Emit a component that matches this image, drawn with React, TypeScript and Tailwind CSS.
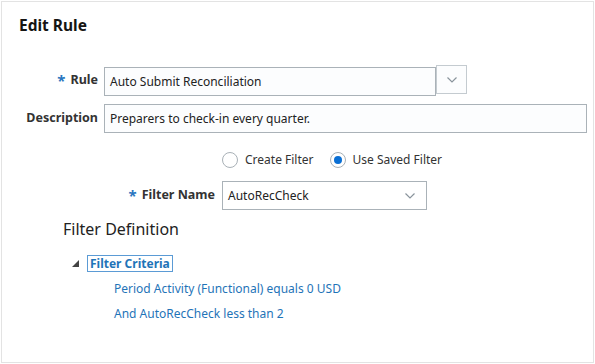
import React from 'react';

const font = { fontFamily: '"Noto Sans", "Open Sans", sans-serif' };

const Chevron = () => (
  <svg width="12" height="8" viewBox="0 0 12 8" fill="none">
    <path d="M1.5 1.5 L6 6 L10.5 1.5" stroke="#8a949c" strokeWidth="1.2" />
  </svg>
);

const App: React.FC = () => {
  return (
    <div className="w-[595px] h-[364px] bg-white p-px" style={font}>
      <div className="h-full border border-[#e3e3e3] text-[12px] text-[#333]">
        <h1 className="pl-[17px] pt-[12px] text-[15.5px] font-bold text-[#161513] leading-[22px]">Edit Rule</h1>

        {/* Rule */}
        <div className="flex items-center mt-[29px]">
          <div className="w-[96px] flex justify-end items-center gap-[5px] font-bold text-[12.5px]">
            <span className="text-[#2a76c0] text-[15px] leading-none">*</span>
            <span>Rule</span>
          </div>
          <div className="ml-[6px] flex items-start">
            <div className="w-[332px] h-[29px] mt-[2px] border border-[#aab2b8] bg-[#fcfdfe] px-[5px] flex items-center text-[#222]">
              Auto Submit Reconciliation
            </div>
            <div className="w-[31px] h-[29px] border border-[#c4cbd0] bg-[#fcfdfe] flex items-center justify-center">
              <Chevron />
            </div>
          </div>
        </div>

        {/* Description */}
        <div className="flex items-center mt-[8px]">
          <div className="w-[96px] text-right font-bold text-[12.5px]">Description</div>
          <div className="ml-[6px] w-[483px] h-[29px] border border-[#aab2b8] bg-[#fcfdfe] px-[5px] flex items-center text-[#222]">
            Preparers to check-in every quarter.
          </div>
        </div>

        {/* Radios */}
        <div className="flex items-center mt-[18px] ml-[220px] gap-[16px]">
          <label className="flex items-center gap-[7px]">
            <span className="w-[16px] h-[16px] rounded-full border border-[#a9b1b7] bg-white" />
            <span>Create Filter</span>
          </label>
          <label className="flex items-center gap-[7px]">
            <span className="w-[16px] h-[16px] rounded-full border border-[#a9b1b7] bg-white flex items-center justify-center">
              <span className="w-[8px] h-[8px] rounded-full bg-[#0a6fd4]" />
            </span>
            <span>Use Saved Filter</span>
          </label>
        </div>

        {/* Filter Name */}
        <div className="flex items-center mt-[12px]">
          <div className="w-[213px] flex justify-end items-center gap-[5px] font-bold text-[12.5px]">
            <span className="text-[#2a76c0] text-[15px] leading-none">*</span>
            <span>Filter Name</span>
          </div>
          <div className="ml-[7px] w-[205px] h-[29px] border border-[#aab2b8] bg-white pl-[5px] pr-[10px] flex items-center justify-between text-[#222]">
            <span>AutoRecCheck</span>
            <Chevron />
          </div>
        </div>

        {/* Filter Definition */}
        <div className="ml-[61px] mt-[8px] text-[16px] leading-[22px] text-[#222]">Filter Definition</div>

        <div className="ml-[69px] mt-[15px] flex items-center gap-[7px]">
          <svg width="9" height="9" viewBox="0 0 9 9">
            <path d="M8 1 L8 8 L1 8 Z" fill="#444" />
          </svg>
          <span className="font-bold text-[#1f74b8] border border-[#5b9bd5] px-[2px] leading-[15px]">Filter Criteria</span>
        </div>

        <div className="ml-[112px] mt-[8px] flex flex-col gap-[8px] text-[#1f74b8] leading-[17px]">
          <span>Period Activity (Functional) equals 0 USD</span>
          <span>And AutoRecCheck less than 2</span>
        </div>
      </div>
    </div>
  );
};

export default App;
